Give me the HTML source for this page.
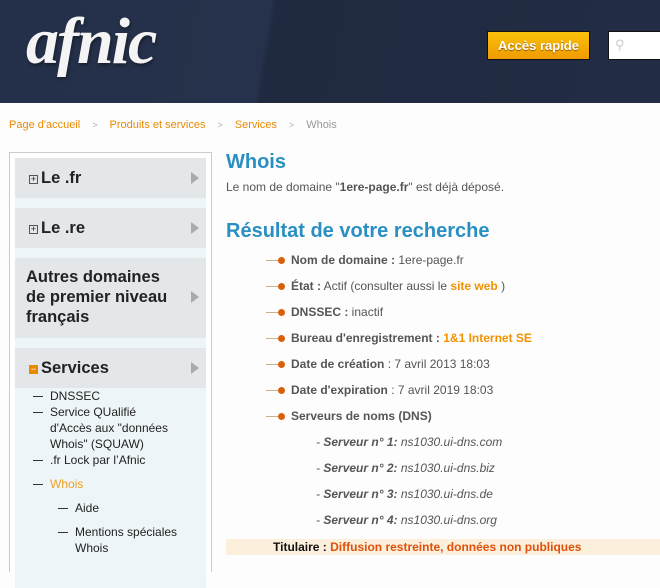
<!DOCTYPE html>
<html><head><meta charset="utf-8"><style>
*{margin:0;padding:0;box-sizing:border-box}
body{width:660px;height:558px;overflow:hidden;background:#fdfdfd;font-family:"Liberation Sans",sans-serif;position:relative}
.hdr{position:absolute;left:0;top:0;width:660px;height:103px;background:linear-gradient(100deg,#243049 0%,#26324b 40%,#1f2940 41%,#222c44 100%)}
.logo{position:absolute;left:26px;top:4px;font-family:"Liberation Serif",serif;font-style:italic;font-weight:bold;font-size:66px;color:#f4f4f4;letter-spacing:-2px;text-shadow:1px 2px 3px rgba(0,0,0,.4)}
.btn{position:absolute;left:487px;top:31px;width:103px;height:29px;border:1px solid #111;background:linear-gradient(#f9c20a,#f09a00);color:#fff;font-weight:bold;font-size:13px;text-align:center;line-height:27px;text-shadow:0 1px 1px #8a5a00}
.srch{position:absolute;left:608px;top:31px;width:60px;height:29px;border:1px solid #111;background:#fff;color:#ccc;font-size:13px;padding:5px 0 0 6px}
.bc{position:absolute;left:9px;top:119px;font-size:11px;color:#e88a00}
.bc span{color:#aaa;margin:0 12px;font-size:9px}
.bc .g{color:#999;font-size:11px;margin:0}
.side{position:absolute;left:9px;top:152px;width:203px;height:420px;border:1px solid #ccc;border-bottom:none;background:#fff}
.it{position:absolute;left:5px;width:191px;background:#e3e7ea;font-weight:bold;font-size:16.5px;color:#222}
.gap{position:absolute;left:5px;width:191px;background:#eef5f8}
.arr{position:absolute;right:7px;width:0;height:0;border-left:8px solid #aaa;border-top:6px solid transparent;border-bottom:6px solid transparent}
.pl{display:inline-block;width:9px;height:9px;border:1px solid #555;font-size:9px;line-height:7px;text-align:center;font-weight:normal;margin-right:3px;vertical-align:1px}
.sub{position:absolute;left:5px;top:235px;width:191px;height:200px;background:#eef5f8;font-size:12px;color:#222}
.sub div{position:absolute;line-height:16px}
.sub i{position:absolute;width:10px;height:1px;background:#333;top:8px}
h1{position:absolute;left:226px;top:151px;font-size:20px;color:#2a8fc2}
.p1{position:absolute;left:226px;top:180px;font-size:12px;color:#555}
h2{position:absolute;left:226px;top:220px;font-size:20px;color:#2a8fc2}
.row{position:absolute;left:266px;font-size:12px;color:#555;white-space:nowrap}
.row:before{content:"";position:absolute;left:0;top:7px;width:14px;height:1px;background:#c8b089}
.row i.d{position:absolute;left:12px;top:4px;width:7px;height:7px;border-radius:50%;background:#d9600a}
.row .t{margin-left:25px}
.o{color:#f39200;font-weight:bold}
.srv{position:absolute;left:316px;font-size:12px;color:#555;font-style:italic}
.tit{position:absolute;left:226px;top:539px;width:434px;height:16px;background:#fcf0dc;font-size:12px;font-weight:bold;padding-left:47px;line-height:16px;color:#111}
</style></head><body>
<div class="hdr"><div class="logo">afnic</div>
<div class="btn">Accès rapide</div><div class="srch">&#9906;</div></div>
<div class="bc">Page d'accueil<span>&gt;</span>Produits et services<span>&gt;</span>Services<span>&gt;</span><b class="g" style="font-weight:normal">Whois</b></div>
<div class="side">
<div class="it" style="top:5px;height:40px;line-height:40px;padding-left:14px"><span class="pl">+</span>Le .fr<i class="arr" style="top:14px"></i></div>
<div class="gap" style="top:45px;height:10px"></div>
<div class="it" style="top:55px;height:40px;line-height:40px;padding-left:14px"><span class="pl">+</span>Le .re<i class="arr" style="top:14px"></i></div>
<div class="gap" style="top:95px;height:10px"></div>
<div class="it" style="top:105px;height:80px;padding:9px 0 0 11px;line-height:20px">Autres domaines<br>de premier niveau<br>français<i class="arr" style="top:33px"></i></div>
<div class="gap" style="top:185px;height:10px"></div>
<div class="it" style="top:195px;height:40px;line-height:40px;padding-left:14px"><span class="pl" style="background:#e88a00;border-color:#e88a00;color:#fff">−</span>Services<i class="arr" style="top:14px"></i></div>
<div class="sub">
<i style="left:18px;top:8px"></i><div style="left:35px;top:0px">DNSSEC</div>
<i style="left:18px;top:24px"></i><div style="left:35px;top:16px">Service QUalifié<br>d'Accès aux "données<br>Whois" (SQUAW)</div>
<i style="left:18px;top:72px"></i><div style="left:35px;top:64px">.fr Lock par l’Afnic</div>
<i style="left:18px;top:96px"></i><div style="left:35px;top:88px;color:#f0a020">Whois</div>
<i style="left:43px;top:120px"></i><div style="left:60px;top:112px">Aide</div>
<i style="left:43px;top:144px"></i><div style="left:60px;top:136px">Mentions spéciales<br>Whois</div>
</div>
</div>
<h1>Whois</h1>
<div class="p1">Le nom de domaine "<b>1ere-page.fr</b>" est déjà déposé.</div>
<h2>Résultat de votre recherche</h2>
<div class="row" style="top:253px"><i class="d"></i><span class="t"><b>Nom de domaine :</b> 1ere-page.fr</span></div>
<div class="row" style="top:279px"><i class="d"></i><span class="t"><b>État :</b> Actif (consulter aussi le <span class="o">site web</span> )</span></div>
<div class="row" style="top:305px"><i class="d"></i><span class="t"><b>DNSSEC :</b> inactif</span></div>
<div class="row" style="top:331px"><i class="d"></i><span class="t"><b>Bureau d'enregistrement :</b> <span class="o">1&amp;1 Internet SE</span></span></div>
<div class="row" style="top:357px"><i class="d"></i><span class="t"><b>Date de création</b> : 7 avril 2013 18:03</span></div>
<div class="row" style="top:383px"><i class="d"></i><span class="t"><b>Date d'expiration</b> : 7 avril 2019 18:03</span></div>
<div class="row" style="top:409px"><i class="d"></i><span class="t"><b>Serveurs de noms (DNS)</b></span></div>
<div class="srv" style="top:435px">- <b>Serveur n° 1:</b> ns1030.ui-dns.com</div>
<div class="srv" style="top:461px">- <b>Serveur n° 2:</b> ns1030.ui-dns.biz</div>
<div class="srv" style="top:487px">- <b>Serveur n° 3:</b> ns1030.ui-dns.de</div>
<div class="srv" style="top:513px">- <b>Serveur n° 4:</b> ns1030.ui-dns.org</div>
<div class="tit">Titulaire : <span style="color:#e0500a">Diffusion restreinte, données non publiques</span></div>
</body></html>
